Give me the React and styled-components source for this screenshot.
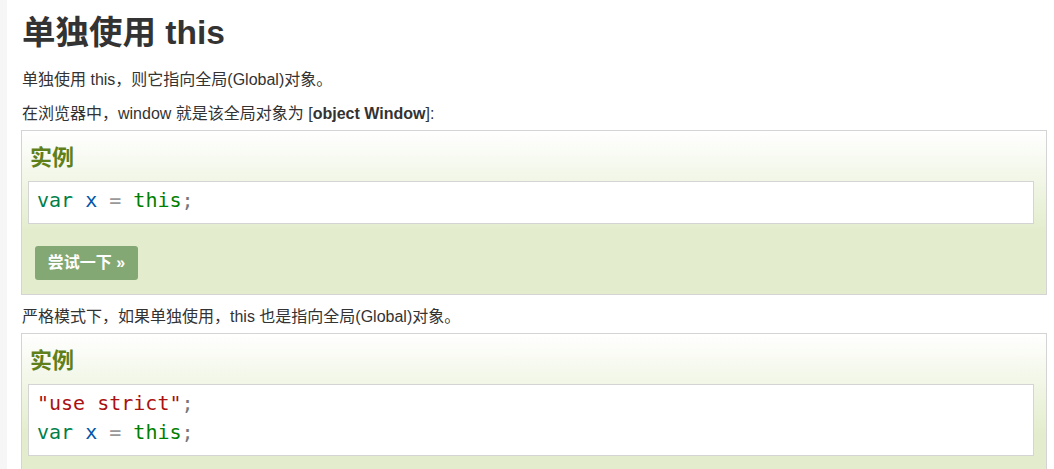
import React from "react";
import styled, { createGlobalStyle } from "styled-components";

const GlobalStyle = createGlobalStyle`
  body {
    margin: 0;
    background: #fff;
    font-family: "Liberation Sans", Arial, "Noto Sans CJK SC", sans-serif;
    color: #333;
  }
`;

const Page = styled.div`
  display: flex;
  min-height: 469px;
`;

const SideStrip = styled.div`
  width: 7px;
  flex-shrink: 0;
  background: #f6f6f6;
`;

const Content = styled.main`
  flex: 1;
  padding: 13px 7px 0 14px;
  overflow: hidden;
`;

const Title = styled.h1`
  margin: 0 0 15px 1px;
  font-size: 33.5px;
  line-height: 40px;
  font-weight: bold;
  color: #333;
`;

const Para = styled.p`
  margin: 10px 0 4px 1px;
  font-size: 16px;
  line-height: 24px;
`;

const Example = styled.div`
  border: 1px solid #d4d4d4;
  background-color: #e5eecc;
  background-image: linear-gradient(#fff, #e3edcd 100px);
  padding: 6px 12px 6px 6px;
  margin: 4px 0 10px;
`;

const ExampleTitle = styled.h2`
  margin: 6px 0 8px 2px;
  font-size: 22px;
  line-height: 30px;
  font-weight: bold;
  color: #5f7f1a;
`;

const CodeBox = styled.div`
  background: #fff;
  border: 1px solid #d4d4d4;
  padding: 4px 8px 8px;
  font-family: "DejaVu Sans Mono", "Liberation Mono", monospace;
  font-size: 20px;
  line-height: 29px;
  white-space: pre;
`;

const Tok = styled.span`
  color: ${(p) => p.$c};
`;

const TryButton = styled.a`
  display: inline-block;
  margin: 22px 0 8px 7px;
  width: 103px;
  height: 34px;
  line-height: 34px;
  text-align: center;
  background: #84a873;
  color: #fff;
  font-size: 16px;
  font-weight: bold;
  border-radius: 3px;
  text-decoration: none;
`;

const C = {
  kw: "#007f4a",
  atom: "#007f00",
  v: "#0055aa",
  op: "#999",
  pun: "#777",
  str: "#aa1111",
};

const VarLine = () => (
  <div>
    <Tok $c={C.kw}>var</Tok> <Tok $c={C.v}>x</Tok> <Tok $c={C.op}>=</Tok>{" "}
    <Tok $c={C.atom}>this</Tok>
    <Tok $c={C.pun}>;</Tok>
  </div>
);

export default function App() {
  return (
    <>
      <GlobalStyle />
      <Page>
        <SideStrip />
        <Content>
          <Title>单独使用 this</Title>
          <Para>单独使用 this，则它指向全局(Global)对象。</Para>
          <Para>
            在浏览器中，window 就是该全局对象为 [<b>object Window</b>]:
          </Para>
          <Example>
            <ExampleTitle>实例</ExampleTitle>
            <CodeBox>
              <VarLine />
            </CodeBox>
            <TryButton href="#">尝试一下 »</TryButton>
          </Example>
          <Para>严格模式下，如果单独使用，this 也是指向全局(Global)对象。</Para>
          <Example>
            <ExampleTitle>实例</ExampleTitle>
            <CodeBox>
              <div>
                <Tok $c={C.str}>"use strict"</Tok>
                <Tok $c={C.pun}>;</Tok>
              </div>
              <VarLine />
            </CodeBox>
            <TryButton href="#">尝试一下 »</TryButton>
          </Example>
        </Content>
      </Page>
    </>
  );
}
